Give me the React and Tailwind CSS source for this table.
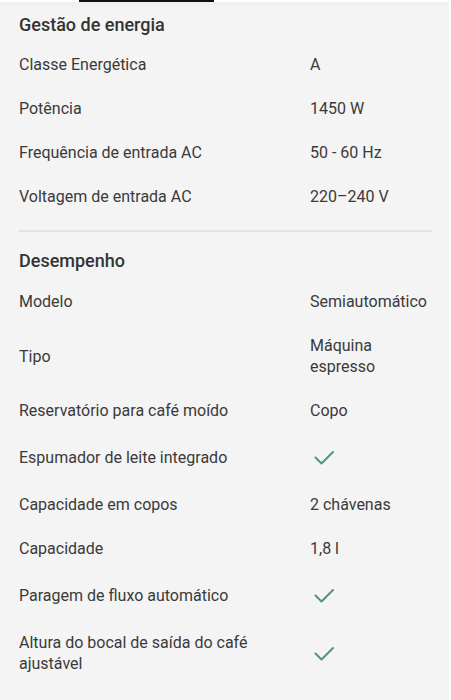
import React from 'react';

const Check = () => (
  <svg width="20" height="15" viewBox="0 0 20 15" fill="none" className="ml-[4px]">
    <path d="M1.5 7.5 L7.5 13.5 L19 2" stroke="#4a9a78" strokeWidth="2" strokeLinecap="round" strokeLinejoin="round" />
  </svg>
);

const energy = [
  ['Classe Energética', 'A'],
  ['Potência', '1450 W'],
  ['Frequência de entrada AC', '50 - 60 Hz'],
  ['Voltagem de entrada AC', '220–240 V'],
];

const performance = [
  ['Modelo', 'Semiautomático'],
  ['Tipo', 'Máquina espresso'],
  ['Reservatório para café moído', 'Copo'],
  ['Espumador de leite integrado', true],
  ['Capacidade em copos', '2 chávenas'],
  ['Capacidade', '1,8 l'],
  ['Paragem de fluxo automático', true],
  ['Altura do bocal de saída do café ajustável', true],
];

const Row = ({ label, value }) => (
  <div className="flex items-center py-[11.5px] text-[16px] leading-[21px] text-[#3a3a3a]">
    <div className="w-[291px] pr-4">{label}</div>
    <div className="flex-1">
      {value === true ? (
        <div className="flex h-[27px] items-center">
          <Check />
        </div>
      ) : (
        value
      )}
    </div>
  </div>
);

export default function App() {
  return (
    <div className="min-h-[700px] bg-white" style={{ fontFamily: 'Roboto, "Noto Sans", sans-serif' }}>
      <div className="w-[449px] min-h-[700px] bg-[#f4f4f4]">
        {/* header edge */}
        <div className="relative h-[2px] bg-white shadow-[0_2px_6px_rgba(0,0,0,0.08)]">
          <div className="ml-[79px] h-[2px] w-[135px] bg-[#111]" />
        </div>

        <div className="pl-[19px] pr-[17px]">
          <section className="pt-[11px]">
            <h2 className="text-[18px] font-medium leading-[24px] text-[#333] mb-[5px]">Gestão de energia</h2>
            {energy.map(([l, v]) => (
              <Row key={l} label={l} value={v} />
            ))}
          </section>

          <div className="mt-[12px] h-[2px] bg-[#e3e3e3]" />

          <section className="pt-[17px]">
            <h2 className="text-[18px] font-medium leading-[24px] text-[#333] mb-[6.5px]">Desempenho</h2>
            {performance.map(([l, v]) => (
              <Row key={l} label={l} value={v} />
            ))}
          </section>
        </div>
      </div>
    </div>
  );
}
